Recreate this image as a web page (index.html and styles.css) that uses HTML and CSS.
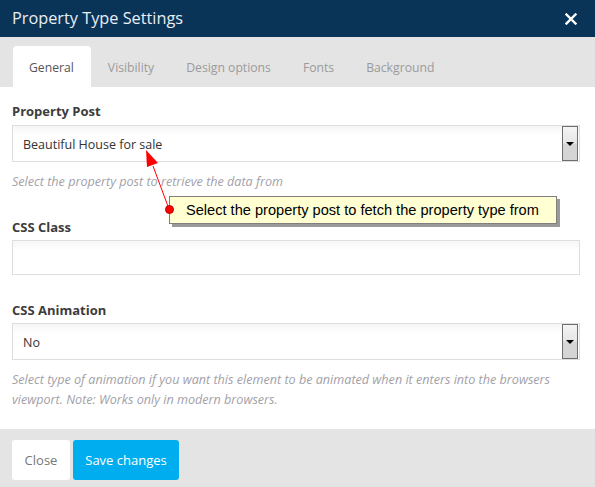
FILE: index.html
```html
<!DOCTYPE html>
<html>
<head>
<meta charset="utf-8">
<link rel="stylesheet" href="styles.css">
</head>
<body>
<div class="modal">
  <div class="header">
    <span class="title">Property Type Settings</span>
    <svg class="close-x" width="12" height="12" viewBox="0 0 12 12"><path d="M1.5 1.5L10.5 10.5M10.5 1.5L1.5 10.5" stroke="#ffffff" stroke-width="2.4" stroke-linecap="square"/></svg>
  </div>
  <div class="tabs">
    <div class="tab active">General</div>
    <div class="tab">Visibility</div>
    <div class="tab">Design options</div>
    <div class="tab">Fonts</div>
    <div class="tab">Background</div>
  </div>
  <div class="body">
    <div class="label first">Property Post</div>
    <div class="select">
      <span class="value">Beautiful House for sale</span>
      <span class="dd"><span class="tri"></span></span>
    </div>
    <div class="help">Select the property post to retrieve the data from</div>

    <div class="label">CSS Class</div>
    <div class="input"></div>

    <div class="label">CSS Animation</div>
    <div class="select">
      <span class="value">No</span>
      <span class="dd"><span class="tri"></span></span>
    </div>
    <div class="help">Select type of animation if you want this element to be animated when it enters into the browsers viewport. Note: Works only in modern browsers.</div>

    <svg class="arrow" width="40" height="70" viewBox="0 0 40 70">
      <line x1="32" y1="65" x2="16" y2="22" stroke="#ff0000" stroke-width="1"/>
      <polygon points="9,6 10,23 21,19" fill="#ff0000"/>
    </svg>
    <div class="tooltip">
      <span class="dot"></span>
      Select the property post to fetch the property type from
    </div>
  </div>
  <div class="footer">
    <button class="btn btn-close">Close</button>
    <button class="btn btn-save">Save changes</button>
  </div>
</div>
</body>
</html>
```
FILE: styles.css
```css
* { box-sizing: border-box; }
html, body { margin: 0; padding: 0; }
body {
  width: 595px;
  height: 487px;
  font-family: "Open Sans", "Liberation Sans", sans-serif;
  background: #ffffff;
  overflow: hidden;
}
.modal {
  display: flex;
  flex-direction: column;
  height: 487px;
}
.header {
  height: 37px;
  background: #0a3358;
  display: flex;
  align-items: center;
  justify-content: space-between;
  padding: 0 18px 0 12px;
}
.title {
  color: #e9eef3;
  font-size: 16.3px;
  line-height: 20px;
  margin-top: -2px;
}
.close-x { margin-top: 1px; }
.tabs {
  height: 50px;
  background: #e4e4e4;
  display: flex;
  align-items: flex-end;
  padding-left: 13px;
}
.tab {
  height: 41px;
  padding: 2px 15px 0;
  margin-right: 2px;
  display: flex;
  align-items: center;
  font-size: 12.2px;
  color: #9b9b9b;
  border-radius: 4px 4px 0 0;
}
.tab.active {
  background: #ffffff;
  color: #555555;
  padding: 2px 17px 0 16px;
  margin-right: 2px;
}
.body {
  position: relative;
  flex: 1;
  padding: 0 15px 0 12px;
}
.label {
  font-size: 13px;
  font-weight: bold;
  color: #3c3c3c;
  line-height: 20px;
  margin-top: 25px;
  margin-bottom: 3px;
}
.label.first { margin-top: 14px; margin-bottom: 4px; }
.select {
  height: 37px;
  border: 1px solid #dedede;
  background: linear-gradient(#f6f6f6, #ffffff 30%);
  display: flex;
  align-items: center;
  justify-content: space-between;
  padding: 0 1px 0 10px;
}
.value {
  font-size: 12.5px;
  color: #333333;
  padding-top: 2px;
}
.dd {
  width: 16px;
  height: 35px;
  border: 1px solid #6e6e6e;
  background: linear-gradient(#f4f4f4 0%, #e6e6e6 48%, #d6d6d6 52%, #d4d4d4 100%);
  display: flex;
  align-items: center;
  justify-content: center;
}
.tri {
  width: 0;
  height: 0;
  border-left: 4px solid transparent;
  border-right: 4px solid transparent;
  border-top: 4px solid #000000;
  margin-top: 1px;
}
.input {
  height: 35px;
  border: 1px solid #dedede;
  background: linear-gradient(#f6f6f6, #ffffff 30%);
}
.help {
  font-size: 12.6px;
  font-style: italic;
  color: #a39fa8;
  line-height: 20px;
  margin-top: 10px;
  padding-right: 10px;
}
.arrow {
  position: absolute;
  left: 137px;
  top: 57px;
}
.tooltip {
  position: absolute;
  left: 169px;
  top: 109px;
  width: 388px;
  height: 28px;
  background: #ffffd2;
  border: 1px solid #7f7f7f;
  box-shadow: 3px 3px 0 #9a9a9a;
  font-family: "Liberation Sans", Arial, sans-serif;
  font-size: 14.6px;
  color: #000000;
  line-height: 26px;
  padding-left: 16px;
  white-space: nowrap;
}
.dot {
  position: absolute;
  left: -5px;
  top: 8px;
  width: 9px;
  height: 9px;
  border-radius: 50%;
  background: #ff0000;
  border: 1px solid #c00000;
}
.footer {
  height: 58px;
  background: #e4e4e4;
  display: flex;
  align-items: flex-start;
  padding: 11px 12px 0;
  gap: 3px;
}
.btn {
  height: 40px;
  border: none;
  border-radius: 3px;
  font-family: "Open Sans", "Liberation Sans", sans-serif;
  font-size: 13px;
  padding: 0 13px;
  cursor: pointer;
}
.btn-close {
  background: #ffffff;
  color: #777777;
  width: 58px;
  padding: 0;
}
.btn-save {
  background: #00aeef;
  color: #ffffff;
  width: 106px;
  padding: 0;
}
```
